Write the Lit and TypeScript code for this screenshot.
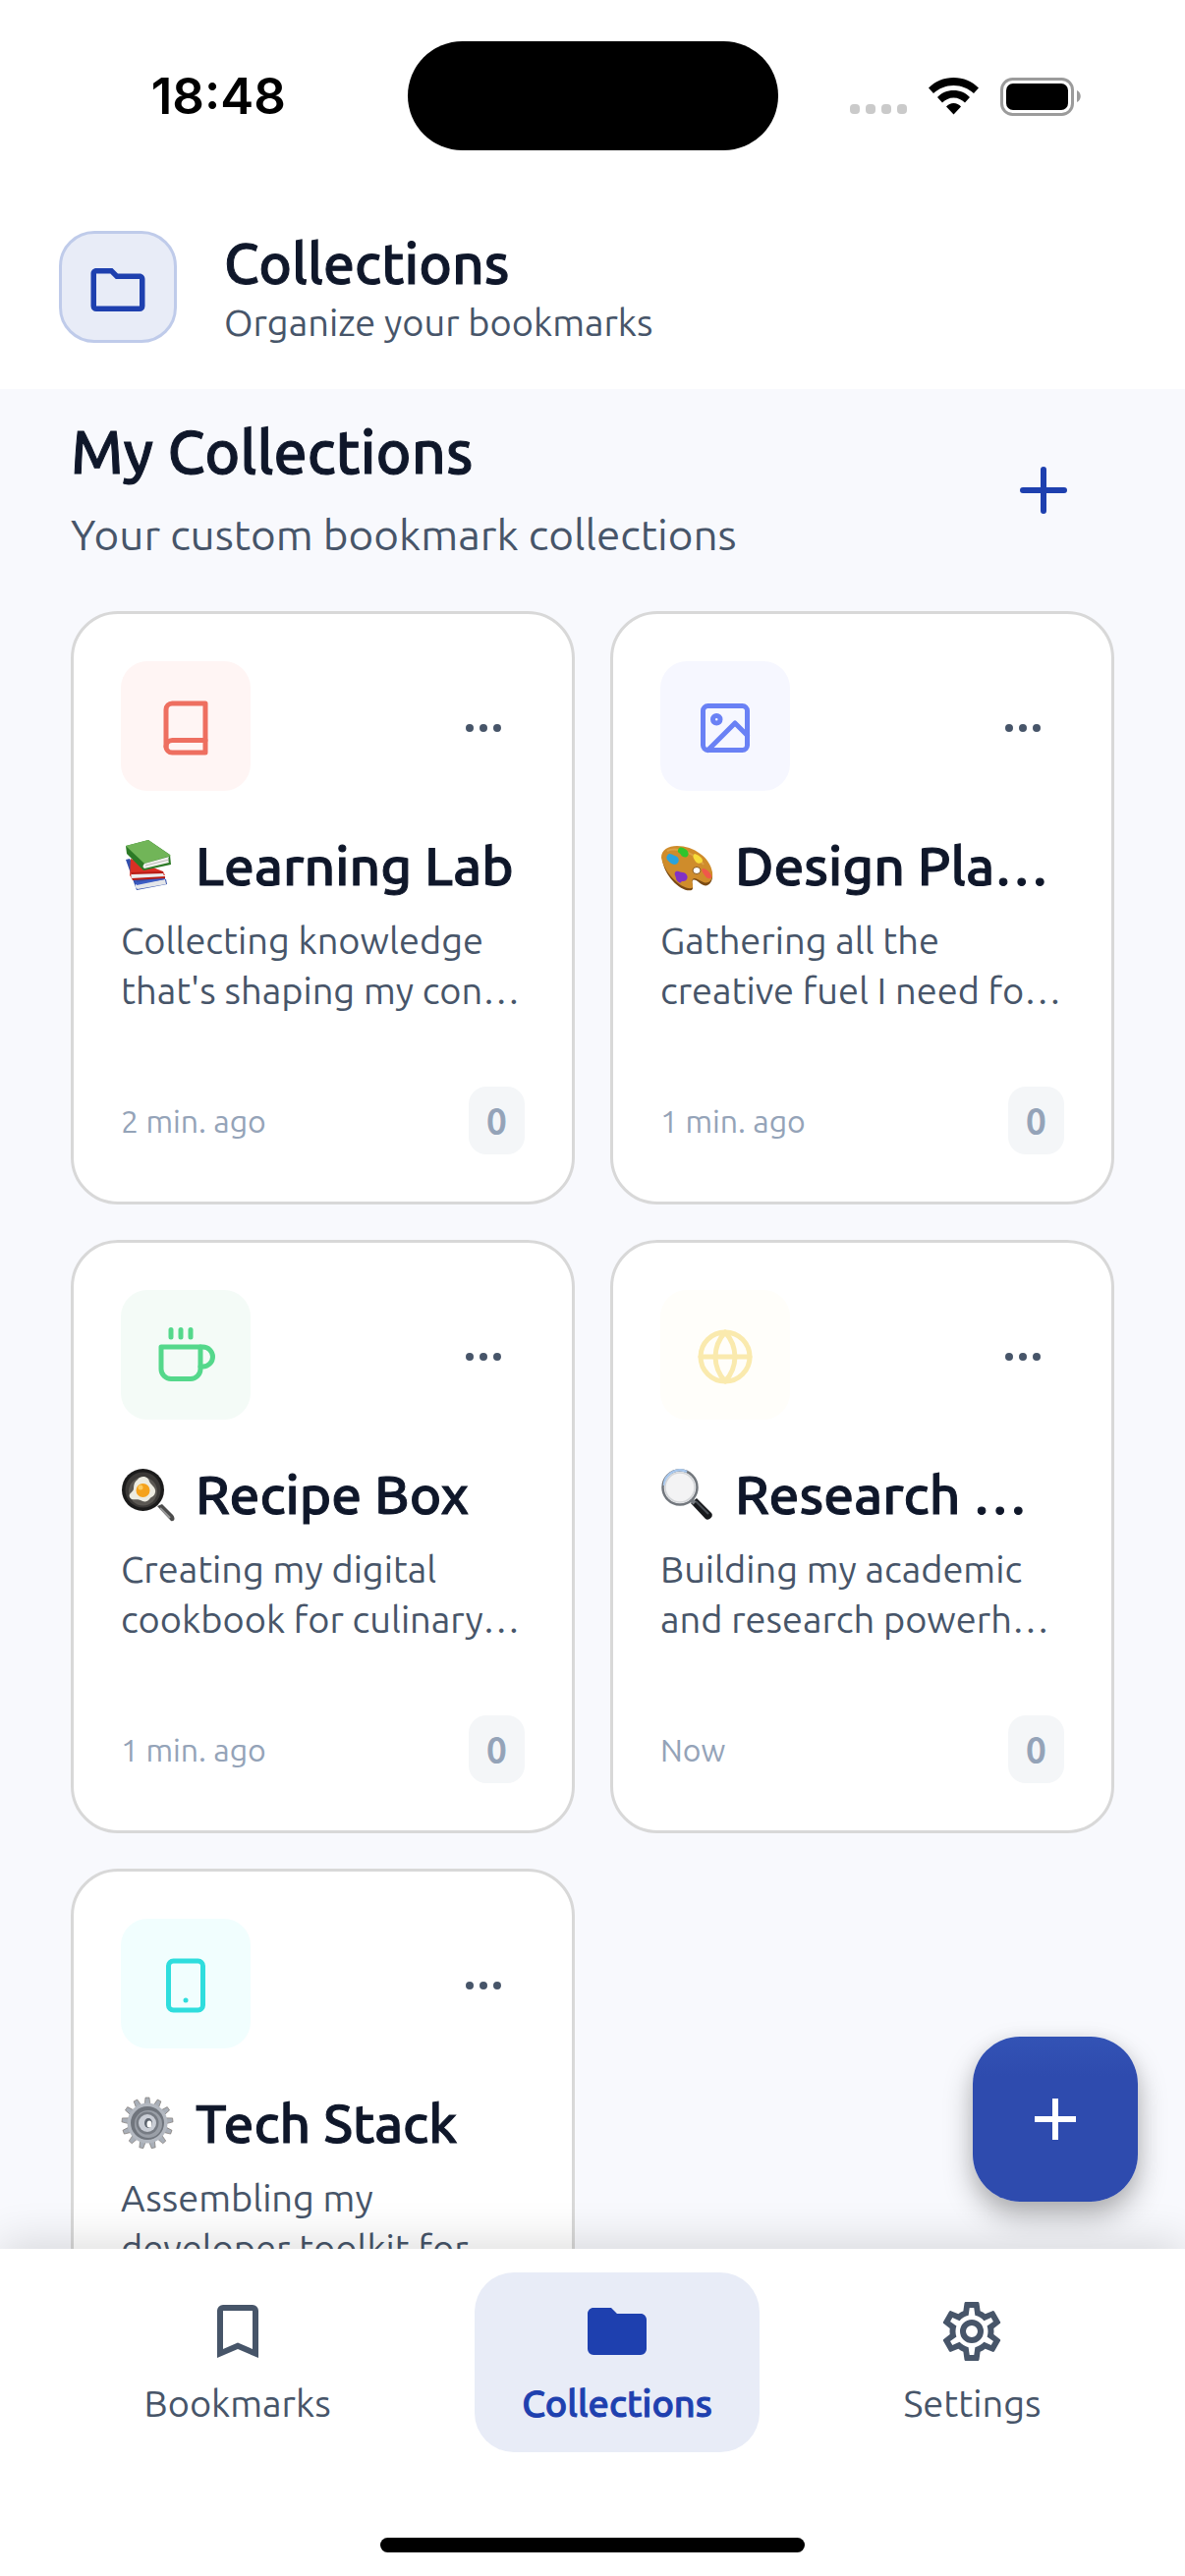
import { LitElement, html, css, svg, nothing } from "lit";
import { customElement, property } from "lit/decorators.js";
import { styleMap } from "lit/directives/style-map.js";

interface Collection {
  emoji: string;
  icon: string;
  color: string;
  tint: string;
  name: string;
  description: string;
  updated?: string;
  count?: number;
}

const collections: Collection[] = [
  { emoji: "books", icon: "book", color: "#ee6f60", tint: "#fff5f4", name: "Learning Lab", description: "Collecting knowledge\nthat's shaping my con…", updated: "2 min. ago", count: 0 },
  { emoji: "palette", icon: "image", color: "#6a81f5", tint: "#f6f7ff", name: "Design Pla…", description: "Gathering all the\ncreative fuel I need fo…", updated: "1 min. ago", count: 0 },
  { emoji: "pan", icon: "coffee", color: "#54d88b", tint: "#f4fbf7", name: "Recipe Box", description: "Creating my digital\ncookbook for culinary…", updated: "1 min. ago", count: 0 },
  { emoji: "lens", icon: "globe", color: "#faeaae", tint: "#fffefa", name: "Research …", description: "Building my academic\nand research powerh…", updated: "Now", count: 0 },
  { emoji: "gear", icon: "phone", color: "#2fdddd", tint: "#f1fefe", name: "Tech Stack", description: "Assembling my\ndeveloper toolkit for" },
];

/* Line icons on a 24-unit grid, stroked with the current colour. */
const lineIcons: Record<string, unknown> = {
  book: svg`<path d="M4 19.5A2.5 2.5 0 0 1 6.5 17H20"/><path d="M6.5 2H20v20H6.5A2.5 2.5 0 0 1 4 19.5v-15A2.5 2.5 0 0 1 6.5 2z"/>`,
  image: svg`<rect x="3" y="3" width="18" height="18" rx="2"/><circle cx="8.500" cy="8.500" r="1.500"/><path d="M21 15l-5-5L5 21"/>`,
  coffee: svg`<path d="M18 8h1a4 4 0 0 1 0 8h-1"/><path d="M2 8h16v9a4 4 0 0 1-4 4H6a4 4 0 0 1-4-4V8z"/><path d="M6 1v3M10 1v3M14 1v3"/>`,
  globe: svg`<circle cx="12" cy="12" r="10"/><path d="M2 12h20"/><path d="M12 2a15.300 15.300 0 0 1 4 10 15.300 15.300 0 0 1-4 10 15.300 15.300 0 0 1-4-10 15.300 15.300 0 0 1 4-10z"/>`,
  phone: svg`<rect x="5" y="2" width="14" height="20" rx="2"/><path d="M12 18h.01"/>`,
  more: svg`<circle cx="12" cy="12" r="1"/><circle cx="19" cy="12" r="1"/><circle cx="5" cy="12" r="1"/>`,
};

/* Solid icons on a 24-unit grid, filled with the current colour. */
const solidIcons: Record<string, unknown> = {
  folderOutline: svg`<path d="M20 18H4V8h16m0-2h-8l-2-2H4c-1.110 0-2 .89-2 2v12a2 2 0 0 0 2 2h16a2 2 0 0 0 2-2V8c0-1.110-.9-2-2-2z"/><path d="M4 6h5.200l2 2H4z" fill="#e8ecf7"/>`,
  folder: svg`<path d="M10 4H4c-1.110 0-2 .89-2 2v12a2 2 0 0 0 2 2h16a2 2 0 0 0 2-2V8c0-1.110-.9-2-2-2h-8l-2-2z"/>`,
  bookmark: svg`<path d="M17 18l-5-2.180L7 18V5h10m0-2H7a2 2 0 0 0-2 2v16l7-3 7 3V5a2 2 0 0 0-2-2z"/>`,
  cog: svg`<path d="M12 8a4 4 0 0 1 4 4 4 4 0 0 1-4 4 4 4 0 0 1-4-4 4 4 0 0 1 4-4m0 2a2 2 0 0 0-2 2 2 2 0 0 0 2 2 2 2 0 0 0 2-2 2 2 0 0 0-2-2m-2 12c-.25 0-.46-.18-.5-.42l-.37-2.650c-.63-.25-1.170-.59-1.690-.99l-2.490 1.010c-.22.080-.49 0-.61-.22l-2-3.460c-.13-.22-.070-.49.120-.64l2.110-1.660L4.500 12l.070-1-2.110-1.630c-.19-.15-.25-.42-.12-.64l2-3.460c.12-.22.390-.31.610-.22l2.490 1c.52-.39 1.060-.73 1.690-.98l.37-2.650c.04-.24.25-.42.5-.42h4c.25 0 .46.180.5.420l.37 2.650c.63.250 1.170.590 1.690.980l2.490-1c.22-.09.490 0 .61.220l2 3.460c.13.220.070.490-.12.640L19.430 11l.070 1-.070 1 2.110 1.630c.19.150.250.420.120.640l-2 3.460c-.12.220-.39.310-.61.220l-2.490-1c-.52.390-1.060.730-1.690.980l-.37 2.650c-.04.240-.25.420-.5.420h-4m1.250-18l-.37 2.610c-1.200.25-2.260.890-3.030 1.780L5.440 7.350l-.75 1.300L6.800 10.200a5.550 5.550 0 0 0 0 3.600l-2.120 1.560.75 1.300 2.430-1.040c.77.880 1.820 1.520 3.010 1.760l.37 2.620h1.520l.37-2.610c1.190-.25 2.240-.89 3.010-1.770l2.430 1.040.75-1.300-2.120-1.550c.4-1.170.4-2.440 0-3.610l2.110-1.550-.75-1.300-2.410 1.040a5.420 5.420 0 0 0-3.030-1.770L12.750 4h-1.500z"/>`,
};

const teeth = Array.from({ length: 13 }, (_, i) => i * (360 / 13));

/* Picture glyphs that precede a collection's name, on a 54-unit grid. */
const pictures: Record<string, { label: string; art: unknown }> = {
  books: {
    label: "Books",
    art: svg`
      <path d="M5 21L16 52L47 46L46 41L18 37L9 20z" fill="#3350ad"/>
      <path d="M15 46l30-5 1 5-29 5c-2-1-3-3-2-5z" fill="#e4e6ea"/>
      <path d="M12 35l4 9 29-5v2l-29 6z" fill="#3c5cc4"/>
      <path d="M10 20l33 13 2 4-34 3-2-3z" fill="#d93024"/>
      <path d="M11 35l32-1 1 5-32 1.500c-2-1-2-4-1-5.500z" fill="#ececec"/>
      <path d="M10 34l33-1v2l-32 1zM11 40l34-2v2l-33 2z" fill="#b81c14"/>
      <path d="M5 7L28 1L50 16L51 26L23 32L6 15z" fill="#2c7a26"/>
      <path d="M5 7L28 1L51 17L24 25z" fill="#71b558"/>
      <path d="M24 25l25-7c-1 2-1 4 0 6l-25 6c-2-1-2-3 0-5z" fill="#f1f1ee"/>
      <path d="M25 27l24-6" stroke="#bcbcb8" stroke-width="1" fill="none"/>`,
  },
  palette: {
    label: "Artist palette",
    art: svg`
      <path d="M2 21C1 12 8 8 17 8C34 8 50 21 53 36C54 43 49 49 44 47C39 45 36 40 33 42C31 44 35 50 32 52C22 55 4 38 2 21z" fill="#7a4a13"/>
      <path d="M1 19C1 11 8 7 17 7C34 7 51 19 53 34C54 42 49 46 44 44C39 42 35 38 33 41C31 43 35 49 32 50C22 52 4 35 1 19z" fill="#cf8c2b"/>
      <path d="M7 12C18 7 37 16 44 26" stroke="#dba145" stroke-width="2" fill="none"/>
      <ellipse cx="37" cy="32" rx="4" ry="3.500" fill="#fff" stroke="#8a5a1c"/>
      <path d="M7 17c2-4 5-1 8 0s5 4 3 7-6 2-8 0-5-4-3-7z" fill="#2aa3dc"/>
      <path d="M18 11c2-4 5-2 7-1s5 4 3 7-6 1-7-1-4-2-3-5z" fill="#2fc52c"/>
      <path d="M35 15c3 1 8 4 8 7s-5 4-7 1-4-6-1-8z" fill="#f7dc39"/>
      <path d="M43 30c3-1 9 5 9 8s-4 3-6 0-5-6-3-8z" fill="#f0574a"/>
      <path d="M16 33c3-1 4 1 7 1s6 4 4 7-5 1-6 3-5-2-5-4-3-5 0-7z" fill="#8231c4"/>`,
  },
  pan: {
    label: "Cooking",
    art: svg`
      <path d="M37 39l5-2 11 11c3 4 1 7-2 6z" fill="#4c4c4c"/>
      <path d="M40 41l10 10" stroke="#989898" stroke-width="2"/>
      <circle cx="22.500" cy="22.500" r="21.500" fill="#1b1b1b"/>
      <circle cx="22.500" cy="22.500" r="18" fill="#3b3937"/>
      <circle cx="22.500" cy="24" r="14.500" fill="#5b5853"/>
      <path d="M17 12c4-5 11-3 12 2 2 4 7 6 6 11s-4 4-6 7-6 3-9 1-9 1-11-3 4-5 4-9 1-7 4-9z" fill="#ecebe0"/>
      <circle cx="22.500" cy="23" r="7" fill="#f5a21b"/>
      <circle cx="20" cy="20" r="2.500" fill="#fccb61"/>`,
  },
  lens: {
    label: "Magnifying glass",
    art: svg`
      <path d="M31 36l6-5 15 15c3 3-3 9-6 6z" fill="#17191c"/>
      <path d="M36 34l13 13" stroke="#4b5056" stroke-width="2"/>
      <path d="M31 32l4 4" stroke="#777c82" stroke-width="4"/>
      <circle cx="20" cy="20" r="17.500" fill="#f2f2f3" stroke="#72777d" stroke-width="2.500"/>
      <path d="M4 18A16 16 0 0 1 27 4" fill="none" stroke="#a9c9ef" stroke-width="2.500"/>
      <circle cx="20" cy="20" r="15" fill="#f3f3f4" stroke="#d3d5d8" stroke-width="1.500"/>`,
  },
  gear: {
    label: "Gear",
    art: svg`
      ${teeth.map((a) => svg`<path d="M24 9l1-8h4l1 8z" fill="#a9afb8" stroke="#77706b" stroke-width=".6" transform=${`rotate(${a} 27 27)`}/>`)}
      <circle cx="27" cy="27" r="20.500" fill="#b3b8c0"/>
      <circle cx="27" cy="27" r="17" fill="#70757d"/>
      <circle cx="28" cy="28" r="14" fill="#9a9fa7"/>
      <circle cx="27" cy="27" r="11.500" fill="#777c84"/>
      <circle cx="27" cy="27" r="9" fill="#c9cdd5"/>
      <ellipse cx="28" cy="27" rx="4" ry="5" fill="#5d646e"/>
      <ellipse cx="29" cy="28" rx="2.500" ry="3.500" fill="#fff"/>`,
  },
};

const baseStyles = css`
  * { box-sizing: border-box; }
  h1, h2, h3, p { margin: 0; font-weight: 400; }
  button {
    border: 0; padding: 0; background: none; font: inherit; color: inherit; cursor: pointer;
    display: flex; align-items: center; justify-content: center;
  }
  svg { display: block; flex: none; }
  .line { fill: none; stroke: currentColor; stroke-width: 2; stroke-linecap: round; stroke-linejoin: round; }
  .solid { fill: currentColor; }
  .strong { font-weight: 500; -webkit-text-stroke: 1px currentColor; }
`;

@customElement("collection-card")
export class CollectionCard extends LitElement {
  @property({ attribute: false }) item!: Collection;

  static styles = [baseStyles, css`
    :host { display: block; min-width: 0; }
    .card { display: flex; flex-direction: column; height: 100%; padding: 48px; border: 3px solid #d8d8d8; border-radius: 48px; background: #fff; }
    .top { display: flex; align-items: center; justify-content: space-between; }
    .badge { display: flex; align-items: center; justify-content: center; width: 132px; height: 132px; padding-top: 4px; border-radius: 27px; }
    .more { width: 84px; height: 84px; padding-top: 4px; color: #475569; }
    .heading { display: flex; align-items: center; gap: 22px; margin-top: 40px; }
    .name { font-size: 55px; line-height: 72px; color: #0f172a; white-space: pre; }
    .description { margin-top: 15px; font-size: 38px; line-height: 51px; color: #475569; white-space: pre; }
    .bottom { display: flex; align-items: center; justify-content: space-between; min-height: 69px; margin-top: 72px; }
    .updated { font-size: 32px; line-height: 42px; color: #94a3b8; }
    .count { min-width: 57px; padding: 9px 18px; border-radius: 18px; background: #f4f6f8; font-size: 36px; line-height: 51px; color: #94a3b8; text-align: center; }
  `];

  render() {
    const c = this.item;
    const picture = pictures[c.emoji];
    return html`
      <article class="card">
        <div class="top">
          <div class="badge" style=${styleMap({ color: c.color, background: c.tint })}>
            <svg class="line" width="60" height="60" viewBox="0 0 24 24" overflow="visible" aria-hidden="true">${lineIcons[c.icon]}</svg>
          </div>
          <button class="more" aria-label="More options">
            <svg class="line" width="48" height="48" viewBox="0 0 24 24" aria-hidden="true">${lineIcons.more}</svg>
          </button>
        </div>
        <div class="heading">
          <svg width="54" height="54" viewBox="0 0 54 54" overflow="visible" role="img" aria-label=${picture.label}>${picture.art}</svg>
          <h3 class="name strong">${c.name}</h3>
        </div>
        <p class="description">${c.description}</p>
        <div class="bottom">
          ${c.updated === undefined ? nothing : html`<span class="updated">${c.updated}</span>`}
          ${c.count === undefined ? nothing : html`<span class="count strong">${c.count}</span>`}
        </div>
      </article>
    `;
  }
}

@customElement("app-root")
export class AppRoot extends LitElement {
  static styles = [baseStyles, css`
    :host { display: flex; flex-direction: column; height: 100vh; overflow: hidden; background: #fff; font-family: Ubuntu, "Noto Sans", sans-serif; color: #0f172a; }
    .status { display: grid; grid-template-columns: 1fr auto 1fr; align-items: center; height: 194px; }
    .time { justify-self: center; padding: 2px 0 0 30px; font-family: Inter, "Liberation Sans", sans-serif; font-size: 51px; line-height: 60px; font-weight: 600; color: #000; }
    .island { width: 377px; height: 111px; border-radius: 56px; background: #000; }
    .signals { justify-self: end; display: flex; align-items: center; gap: 22px; margin-right: 105px; padding-top: 2px; }
    .header { display: flex; align-items: center; gap: 48px; padding: 38px 60px 44px; }
    .mark { display: flex; align-items: center; justify-content: center; width: 120px; height: 114px; padding-top: 6px; border: 3px solid #bfcbea; border-radius: 36px; background: #e8ecf7; color: #1e40af; }
    .title { font-size: 57px; line-height: 72px; }
    .subtitle { font-size: 38px; line-height: 48px; color: #475569; }
    .stage { position: relative; flex: 1 1 0; min-height: 0; display: flex; flex-direction: column; background: #f8f9fd; }
    .content { flex: 1 1 0; min-height: 0; overflow: hidden; padding: 28px 72px 0; }
    .section { display: flex; align-items: center; justify-content: space-between; margin-bottom: 48px; }
    .section-title { font-size: 61px; line-height: 72px; }
    .section-note { margin-top: 18px; font-size: 44px; line-height: 60px; color: #475569; }
    .add { width: 144px; height: 144px; color: #1e40af; }
    .grid { display: grid; grid-template-columns: repeat(2, minmax(0, 1fr)); gap: 36px; }
    .fab { position: absolute; right: 48px; bottom: 48px; width: 168px; height: 168px; border-radius: 48px; color: #fff; background: linear-gradient(#3353b5, #2e4bae 24%, #2e4bae); box-shadow: 0 15px 30px rgba(0, 0, 0, .28), 0 3px 18px rgba(0, 0, 0, .08); }
    .tabs { position: relative; display: flex; justify-content: space-evenly; padding: 24px 0 87px; background: #fff; box-shadow: 0 -6px 42px rgba(0, 0, 0, .14); }
    .tab { display: flex; flex-direction: column; align-items: center; gap: 12px; padding: 24px 48px; border-radius: 40px; font-size: 38px; line-height: 51px; color: #475569; text-decoration: none; }
    .tab.active { background: #e8ecf7; color: #1e40af; }
    .home { display: flex; justify-content: center; padding-bottom: 24px; background: #fff; position: relative; }
    .pill { width: 432px; height: 15px; border-radius: 8px; background: #000; }
  `];

  private tab(icon: string, label: string, active = false) {
    return html`
      <a class="tab ${active ? "active" : ""}" href="#${label.toLowerCase()}" aria-current=${active ? "page" : "false"}>
        <svg class="solid" width="72" height="72" viewBox="0 0 24 24" aria-hidden="true">${solidIcons[icon]}</svg>
        <span class=${active ? "strong" : ""}>${label}</span>
      </a>
    `;
  }

  render() {
    return html`
      <div class="status">
        <span class="time">18:48</span>
        <span class="island"></span>
        <div class="signals">
          <svg width="58" height="38" viewBox="0 0 58 38" fill="#cacaca" aria-hidden="true">
            ${[0, 16, 32, 48].map((x) => svg`<rect x=${x} y="27" width="10" height="10" rx="4"/>`)}
          </svg>
          <svg width="51" height="38" viewBox="0 0 51 38" aria-hidden="true">
            <path d="M25.500 0C35.500 0 44.500 4 51 10.500L46 16C40.500 11 33.500 8 25.500 8S10.500 11 5 16L0 10.500C6.500 4 15.500 0 25.500 0z"/>
            <path d="M25.500 13C32 13 38 15.500 42 20L37 25.500C34 22.500 30 20.500 25.500 20.500S17 22.500 14 25.500L9 20C13 15.500 19 13 25.500 13z"/>
            <path d="M25.500 26C28.500 26 31 27.500 33 29.500L25.500 37.500L18 29.500C20 27.500 22.500 26 25.500 26z"/>
          </svg>
          <svg width="83" height="39" viewBox="0 0 83 39" aria-hidden="true">
            <rect x="1.500" y="1.500" width="72" height="36" rx="11" fill="none" stroke="#9b9b9b" stroke-width="3"/>
            <rect x="6" y="6" width="63" height="27" rx="7"/>
            <path d="M78 13c5 2 5 10 0 12z" fill="#9b9b9b"/>
          </svg>
        </div>
      </div>

      <header class="header">
        <div class="mark">
          <svg class="solid" width="66" height="66" viewBox="0 0 24 24" aria-hidden="true">${solidIcons.folderOutline}</svg>
        </div>
        <div>
          <h1 class="title strong">Collections</h1>
          <p class="subtitle">Organize your bookmarks</p>
        </div>
      </header>

      <main class="stage">
        <div class="content">
          <div class="section">
            <div>
              <h2 class="section-title strong">My Collections</h2>
              <p class="section-note">Your custom bookmark collections</p>
            </div>
            <button class="add" aria-label="Add collection">
              <svg width="48" height="48" viewBox="0 0 48 48" fill="none" stroke="currentColor" stroke-width="6" stroke-linecap="round" aria-hidden="true">
                <path d="M24 3v42M3 24h42"/>
              </svg>
            </button>
          </div>
          <div class="grid">
            ${collections.map((item) => html`<collection-card .item=${item}></collection-card>`)}
          </div>
        </div>
        <button class="fab" aria-label="New collection">
          <svg width="42" height="42" viewBox="0 0 42 42" fill="none" stroke="currentColor" stroke-width="6" aria-hidden="true">
            <path d="M21 0v42M0 21h42"/>
          </svg>
        </button>
      </main>

      <nav class="tabs">
        ${this.tab("bookmark", "Bookmarks")}
        ${this.tab("folder", "Collections", true)}
        ${this.tab("cog", "Settings")}
      </nav>
      <div class="home"><span class="pill"></span></div>
    `;
  }
}
